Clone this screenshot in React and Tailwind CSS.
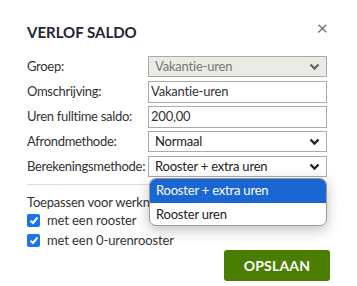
import React from "react";

const Chevron = ({ color = "#222" }) => (
  <svg width="11" height="8" viewBox="0 0 11 8">
    <path d="M1.5 1.5 L5.5 5.5 L9.5 1.5" fill="none" stroke={color} strokeWidth="2.4" />
  </svg>
);

function Row({ label, children }) {
  return (
    <div className="flex items-center h-[21px]">
      <div className="w-[121px] text-[13px] text-[#333] tracking-[-0.3px]">{label}</div>
      {children}
    </div>
  );
}

export default function App() {
  return (
    <div className="w-[357px] h-[286px] bg-white relative overflow-hidden" style={{ fontFamily: "Lato, 'Open Sans', sans-serif" }}>
      <div className="pl-[27px] pr-[30px] pt-[18px]">
        <div className="flex items-start justify-between">
          <h1 className="text-[15px] font-bold text-[#1f2533] mt-[3px] leading-[22px]">VERLOF SALDO</h1>
          <span className="text-[20px] leading-[20px] text-[#777] mr-[-1px] mt-[-1px]">×</span>
        </div>
        <div className="mt-[13px] flex flex-col gap-[4px]">
          <Row label="Groep:">
            <div className="w-[179px] h-[21px] bg-[#ebeae5] border border-[#aaa] flex items-center justify-between px-[6px] text-[13px] text-[#777] tracking-[-0.2px]">
              <span>Vakantie-uren</span>
              <Chevron color="#666" />
            </div>
          </Row>
          <Row label="Omschrijving:">
            <div className="w-[179px] h-[22px] border border-[#aaa] flex items-center px-[2px] text-[13px] text-[#333] tracking-[-0.2px]">Vakantie-uren</div>
          </Row>
          <Row label="Uren fulltime saldo:">
            <div className="w-[179px] h-[22px] border border-[#aaa] flex items-center px-[2px] text-[13px] text-[#333] tracking-[-0.2px]">200,00</div>
          </Row>
          <Row label="Afrondmethode:">
            <div className="w-[179px] h-[21px] border border-[#aaa] flex items-center justify-between px-[6px] text-[13px] text-[#222] tracking-[-0.2px]">
              <span>Normaal</span>
              <Chevron />
            </div>
          </Row>
          <Row label="Berekeningsmethode:">
            <div className="w-[179px] h-[21px] border border-[#aaa] flex items-center justify-between px-[6px] text-[13px] text-[#222] tracking-[-0.2px]">
              <span>Rooster + extra uren</span>
              <Chevron />
            </div>
          </Row>
        </div>
        <div className="mt-[7px] border-t border-[#ddd]" />
        <div className="mt-[8px] text-[13px] text-[#333] leading-[18px] tracking-[-0.2px]">Toepassen voor werknemers</div>
        <div className="mt-[3px] flex flex-col gap-[7px]">
          {["met een rooster", "met een 0-urenrooster"].map((t) => (
            <div key={t} className="flex items-center gap-[7px] h-[13px]">
              <div className="w-[13px] h-[13px] rounded-[2px] bg-[#1a73e8] flex items-center justify-center">
                <svg width="10" height="9" viewBox="0 0 10 9">
                  <path d="M1.5 4.8 L4 7 L8.5 1.5" fill="none" stroke="#fff" strokeWidth="2" />
                </svg>
              </div>
              <span className="text-[13px] text-[#333] tracking-[-0.1px]">{t}</span>
            </div>
          ))}
        </div>
        <div className="flex justify-end mt-[3px] mr-[-3px]">
          <button className="w-[106px] h-[31px] bg-[#4a7d00] rounded-[3px] text-white font-bold text-[14px] tracking-[0.2px]">OPSLAAN</button>
        </div>
      </div>
      <div className="absolute left-[149px] top-[178px] w-[178px] h-[48px] bg-white border border-[#999] rounded-[7px] overflow-hidden shadow-[0_4px_14px_rgba(0,0,0,0.25)] text-[13px] tracking-[-0.2px]">
        <div className="h-[24px] bg-[#1a66d2] text-white flex items-center px-[6px]">Rooster + extra uren</div>
        <div className="h-[23px] text-[#222] flex items-center px-[6px]">Rooster uren</div>
      </div>
    </div>
  );
}
